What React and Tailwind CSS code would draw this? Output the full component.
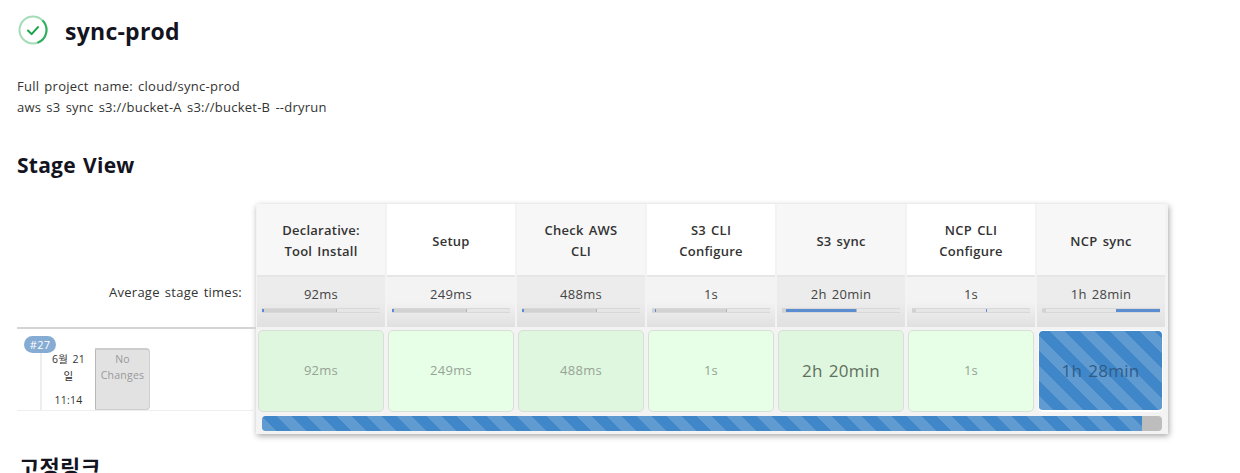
const FONT = "font-['Open_Sans','Noto_Sans_CJK_KR',sans-serif]";

const stages = [
  { name: ['Declarative:', 'Tool Install'], avg: '92ms', odd: true, shade: 74, left: 0, width: 2 },
  { name: ['Setup'], avg: '249ms', odd: false, shade: 74, left: 0, width: 2 },
  { name: ['Check AWS', 'CLI'], avg: '488ms', odd: true, shade: 74, left: 0, width: 2 },
  { name: ['S3 CLI', 'Configure'], avg: '1s', odd: false, shade: 74, left: 3, width: 1 },
  { name: ['S3 sync'], avg: '2h 20min', odd: true, shade: 4, left: 4, width: 70, big: true },
  { name: ['NCP CLI', 'Configure'], avg: '1s', odd: false, shade: 4, left: 74, width: 1 },
  { name: ['NCP sync'], avg: '1h 28min', odd: true, shade: 4, left: 74, width: 44, running: true },
];

const STRIPES =
  'bg-[repeating-linear-gradient(45deg,#5f9bd1_0px,#5f9bd1_10.6px,#3f87c9_10.6px,#3f87c9_21.2px)]';

const StageColumn = ({ stage }) => {
  const { odd } = stage;
  return (
    <div className="w-[130px] shrink-0 flex flex-col">
      <div
        className={`h-[71px] mx-px pt-[3px] flex flex-col items-center justify-center text-[13px] leading-[21px] font-semibold text-[#333] ${
          odd ? 'bg-[#f7f7f7]' : 'bg-white'
        }`}
      >
        {stage.name.map((line) => (
          <span key={line}>{line}</span>
        ))}
      </div>
      <div
        className={`h-[52px] mx-px border-t-2 border-[#e6e6e6] pt-[7px] px-[5px] text-center text-[13px] leading-[20px] text-[#444] bg-gradient-to-b to-[#e0e0e0] ${
          odd ? 'from-[#ececec] via-[#ececec]' : 'from-[#f3f3f3] via-[#f3f3f3]'
        }`}
      >
        {stage.avg}
        <div className="relative mt-[4px] h-[5px] bg-[#e6e6e6] border-y border-[#d8d8d8] overflow-hidden">
          <div className="absolute left-0 top-0 bottom-0 bg-[#d2d2d2]" style={{ width: stage.shade }} />
          <div className="absolute top-0 bottom-0 left-[74px] w-px bg-[#b5b5b5]" />
          <div
            className="absolute top-[-1px] bottom-[-1px] bg-[#5b8dd0]"
            style={{ left: stage.left, width: stage.width }}
          />
        </div>
      </div>
      <div className="h-[87px] pt-[3px] pb-[2px] pl-[2px] pr-[2px] bg-[#f3f3f3]">
        {stage.running ? (
          <div
            className={`h-full mr-px border border-b-2 border-white rounded-[5px] flex items-center justify-center text-[17px] text-[#2f5c8a] ${STRIPES}`}
          >
            {stage.avg}
          </div>
        ) : (
          <div
            className={`h-full border border-[#d8dfd6] rounded-[5px] flex items-center justify-center ${
              stage.big ? 'text-[17px] text-[#5f6f60]' : 'text-[13px] text-[#96a396]'
            } ${odd ? 'bg-[#dff7df]' : 'bg-[#e6ffe6]'}`}
          >
            {stage.avg}
          </div>
        )}
      </div>
    </div>
  );
};

const BuildRow = () => (
  <div className="relative h-[84px] border-t-2 border-[#d4d4d4] border-b border-b-[#eeeeee] pt-[19px] pl-[23px] flex">
    <span className="absolute left-[7px] top-[7px] z-10 h-[17px] w-[32px] rounded-full bg-[#86acd4] text-white text-[11px] leading-[17px] text-center">
      #27
    </span>
    <div className="w-[55px] h-[62px] border-l-2 border-[#eeeeee] bg-white text-center text-[10.5px] text-[#333] flex flex-col items-center">
      <div className="leading-[17px] mt-[3px]">
        <div>6월 21</div>
        <div>일</div>
      </div>
      <div className="leading-[14px] mt-[8px]">11:14</div>
    </div>
    <div className="w-[55px] h-[62px] bg-[#e2e2e2] border-l border-[#b8b8b8] border-t-2 border-t-[#cccccc] rounded-tr-[4px] rounded-br-[4px] border-r border-r-[#cfcfcf] border-b border-b-[#cfcfcf] text-center text-[10.5px] leading-[16px] text-[#999] pt-[1px]">
      No Changes
    </div>
  </div>
);

const App = () => (
  <div className={`h-screen overflow-hidden bg-white pl-[17px] tracking-[0.25px] [word-spacing:1.5px] ${FONT}`}>
    <div className="flex items-center gap-[17px] pt-[14px] pl-[1px] h-[47px]">
      <svg className="-mt-[2px]" width="30" height="30" viewBox="0 0 30 30" fill="none">
        <circle cx="15" cy="15" r="13.5" stroke="#a3dcb6" strokeWidth="2" />
        <path d="M24.5 5.4A13.5 13.5 0 0 1 19.5 27.7" stroke="#2fae5c" strokeWidth="2" />
        <path d="M10 15.5l3.6 3.6 6.4-7" stroke="#17a34a" strokeWidth="2" strokeLinecap="round" strokeLinejoin="round" />
      </svg>
      <h1 className="text-[23px] leading-[30px] font-bold text-[#14141f]">sync-prod</h1>
    </div>

    <div className="mt-[29px] text-[13px] leading-[21px] text-[#333]">
      <div>Full project name: cloud/sync-prod</div>
      <div>aws s3 sync s3://bucket-A s3://bucket-B --dryrun</div>
    </div>

    <h2 className="mt-[33px] text-[21px] leading-[28px] font-bold text-[#14141f]">Stage View</h2>

    <div className="mt-[25px] flex">
      <div className="w-[239px] shrink-0 pt-[71px]">
        <div className="h-[52px] pt-[7px] pr-[14px] text-right text-[13px] leading-[20px] text-[#333]">
          Average stage times:
        </div>
        <BuildRow />
      </div>
      <div className="w-[912px] shrink-0 shadow-[1px_2px_6px_rgba(0,0,0,0.35)] bg-[#f3f3f3]">
        <div className="flex">
          {stages.map((stage) => (
            <StageColumn key={stage.avg + stage.name[0]} stage={stage} />
          ))}
        </div>
        <div className="h-[20px] px-[6px] pt-[2px]">
          <div className="h-[15px] rounded-[4px] bg-[#bdbdbd] overflow-hidden">
            <div className={`h-full w-[880px] ${STRIPES}`} />
          </div>
        </div>
      </div>
    </div>

    <h2 className="mt-[18px] pl-[2px] text-[22px] leading-[30px] font-bold text-[#14141f]">고정링크</h2>
  </div>
);

export default App;
